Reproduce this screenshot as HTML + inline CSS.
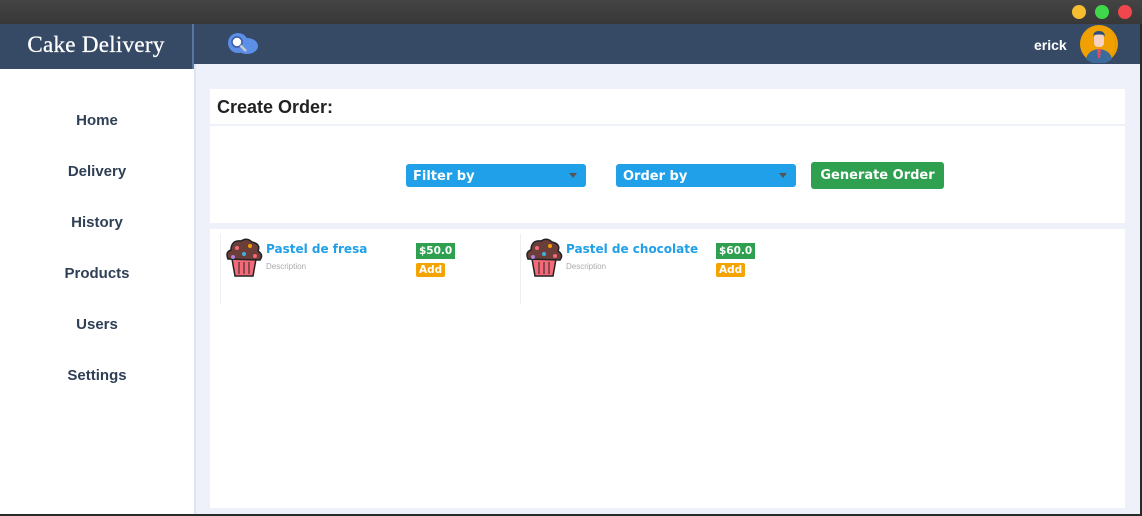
<!DOCTYPE html>
<html><head><style>
*{margin:0;padding:0;box-sizing:border-box}
body{width:1142px;height:516px;overflow:hidden;background:#2a2a2a;font-family:"Liberation Sans",sans-serif;position:relative}
.top{position:absolute;left:0;top:0;width:1142px;height:24px;background:linear-gradient(#444,#383838)}
.dot{position:absolute;top:5px;width:14px;height:14px;border-radius:50%}
.hdr{position:absolute;left:0;top:24px;width:1140px;height:40px;background:#364a66}
.logo{position:absolute;left:0;top:24px;width:194px;height:45px;background:#364a66;border-right:2px solid #5577a0;color:#fff;font-family:"Liberation Serif",serif;font-size:23px;line-height:42px;text-align:center;letter-spacing:.3px;-webkit-text-stroke:0.3px #fff}
.side{position:absolute;left:0;top:69px;width:194px;height:445px;background:#fff}
.side div{height:51px;text-align:center;font-weight:bold;font-size:15px;color:#2f3f55;line-height:103px}
.main{position:absolute;left:194px;top:64px;width:946px;height:450px;background:#eef0fa;border-left:2px solid #dfe4f3}
.panel{position:absolute;background:#fff}
.sel{position:absolute;top:164px;width:180px;height:23px;background:#1fa0e9;border-radius:3px;color:#fff;font-weight:bold;font-size:13px;line-height:25px;padding-left:7px;font-family:"DejaVu Sans",sans-serif}
.sel:after{content:"";position:absolute;right:9px;top:9px;border:4px solid transparent;border-top:5px solid #555}
.card{position:absolute;top:234px;width:300px;height:70px;border-left:1px solid #eee}
.nm{position:absolute;left:45px;top:8px;color:#1fa0e9;font-weight:bold;font-size:12px;font-family:"DejaVu Sans",sans-serif}
.ds{position:absolute;left:45px;top:28px;color:#aaa;font-size:8px}
.pr{position:absolute;left:195px;top:9px;background:#2ea050;color:#fff;font-weight:bold;font-size:10.5px;padding:2px 3px;font-family:"DejaVu Sans",sans-serif}
.ad{position:absolute;left:195px;top:29px;background:#f4a400;color:#fff;font-weight:bold;font-size:10.5px;padding:1px 3px;border-radius:2px;font-family:"DejaVu Sans",sans-serif}
</style></head><body>
<div class="top"></div>
<div class="dot" style="left:1072px;background:#f6be2e"></div>
<div class="dot" style="left:1095px;background:#3fd84a"></div>
<div class="dot" style="left:1118px;background:#f0474f"></div>
<div class="hdr"></div>
<svg style="position:absolute;left:226px;top:33px" width="34" height="22" viewBox="0 0 34 22"><ellipse cx="21" cy="13" rx="11" ry="8" fill="#5b8fe8"/><circle cx="12" cy="10" r="10" fill="#5b8fe8"/><circle cx="11" cy="9" r="5" fill="#fff" stroke="#3a5aa0" stroke-width="1.5"/><line x1="14.5" y1="12.5" x2="20" y2="18" stroke="#ccc" stroke-width="2.5"/></svg>
<div style="position:absolute;left:1034px;top:37px;color:#fff;font-weight:bold;font-size:14px">erick</div>
<svg style="position:absolute;left:1080px;top:25px" width="38" height="38" viewBox="0 0 38 38"><circle cx="19" cy="19" r="19" fill="#f0a000"/><path d="M30 5 A19 19 0 0 1 30 33 A17 19 0 0 0 30 5Z" fill="#d88c00"/><path d="M6 34 Q8 25 19 24 Q30 25 32 34 A19 19 0 0 1 6 34Z" fill="#3c6a9a"/><rect x="14" y="9" width="10" height="13" rx="4" fill="#f7d2c0"/><path d="M13 12 Q13 6 19 6 Q25 6 25 12 L24 10 Q19 9 14 10Z" fill="#2c4f7a"/><path d="M17 24 L21 24 L20 33 L18 33Z" fill="#e05060"/></svg>
<div class="logo">Cake Delivery</div>
<div class="side"><div>Home</div><div>Delivery</div><div>History</div><div>Products</div><div>Users</div><div>Settings</div></div>
<div class="main"></div>
<div class="panel" style="left:210px;top:89px;width:915px;height:35px"></div>
<div style="position:absolute;left:217px;top:97px;font-weight:bold;font-size:18px;color:#222">Create Order:</div>
<div class="panel" style="left:210px;top:126px;width:915px;height:97px"></div>
<div class="panel" style="left:210px;top:229px;width:915px;height:279px"></div>
<div class="sel" style="left:406px">Filter by</div>
<div class="sel" style="left:616px">Order by</div>
<div style="position:absolute;left:811px;top:162px;width:133px;height:27px;background:#2ea050;border-radius:3px;color:#fff;font-weight:bold;font-size:13px;line-height:27px;text-align:center;font-family:'DejaVu Sans',sans-serif">Generate Order</div>
<div class="card" style="left:220px">
<svg style="position:absolute;left:3px;top:3px" width="40" height="40" viewBox="0 0 40 40"><path d="M8 22 L32 22 L29 39 L11 39Z" fill="#f56a78" stroke="#222" stroke-width="1.5"/><path d="M15 25v12M20 25v12M25 25v12" stroke="#222"/><path d="M4 22 Q1 15 7 13 Q7 3 17 4 Q23 0 28 5 Q37 7 34 14 Q40 18 36 23 Z" fill="#6b3e3a" stroke="#222" stroke-width="1.5"/><circle cx="13" cy="11" r="2" fill="#f56a78"/><circle cx="26" cy="9" r="2" fill="#f0a000"/><circle cx="20" cy="17" r="2" fill="#3fb0e0"/><circle cx="9" cy="20" r="2" fill="#b080e0"/><circle cx="31" cy="19" r="2" fill="#f56a78"/></svg>
<div class="nm">Pastel de fresa</div><div class="ds">Description</div><div class="pr">$50.0</div><div class="ad">Add</div></div>
<div class="card" style="left:520px">
<svg style="position:absolute;left:3px;top:3px" width="40" height="40" viewBox="0 0 40 40"><path d="M8 22 L32 22 L29 39 L11 39Z" fill="#f56a78" stroke="#222" stroke-width="1.5"/><path d="M15 25v12M20 25v12M25 25v12" stroke="#222"/><path d="M4 22 Q1 15 7 13 Q7 3 17 4 Q23 0 28 5 Q37 7 34 14 Q40 18 36 23 Z" fill="#6b3e3a" stroke="#222" stroke-width="1.5"/><circle cx="13" cy="11" r="2" fill="#f56a78"/><circle cx="26" cy="9" r="2" fill="#f0a000"/><circle cx="20" cy="17" r="2" fill="#3fb0e0"/><circle cx="9" cy="20" r="2" fill="#b080e0"/><circle cx="31" cy="19" r="2" fill="#f56a78"/></svg>
<div class="nm">Pastel de chocolate</div><div class="ds">Description</div><div class="pr">$60.0</div><div class="ad">Add</div></div>
</body></html>
